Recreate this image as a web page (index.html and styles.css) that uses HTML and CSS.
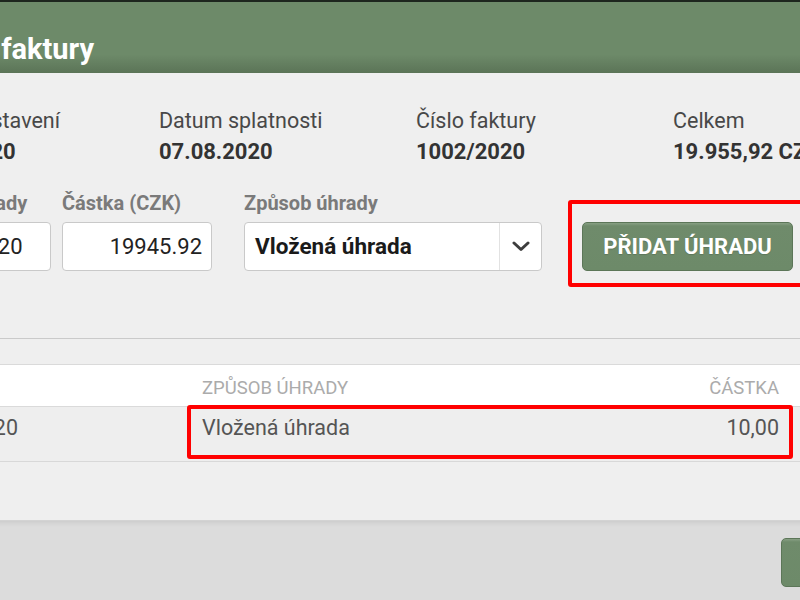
FILE: index.html
```html
<!DOCTYPE html>
<html lang="cs">
<head>
<meta charset="utf-8">
<title>Úhrady faktury</title>
<link rel="stylesheet" href="styles.css">
</head>
<body>
<div class="modal">
  <div class="modal-header">
    <h1 class="title">Úhrady faktury</h1>
  </div>
  <div class="modal-body">
    <div class="info">
      <div class="info-item"><div class="info-label">Datum vystavení</div><div class="info-value">24.07.2020</div></div>
      <div class="info-item"><div class="info-label">Datum splatnosti</div><div class="info-value">07.08.2020</div></div>
      <div class="info-item"><div class="info-label">Číslo faktury</div><div class="info-value">1002/2020</div></div>
      <div class="info-item"><div class="info-label">Celkem</div><div class="info-value">19.955,92 CZK</div></div>
    </div>

    <div class="form-row">
      <div class="field field-date">
        <label class="field-label">Datum úhrady</label>
        <div class="input">03.08.2020</div>
      </div>
      <div class="field field-amount">
        <label class="field-label">Částka (CZK)</label>
        <div class="input input-right">19945.92</div>
      </div>
      <div class="field field-method">
        <label class="field-label">Způsob úhrady</label>
        <div class="select">
          <span class="select-text">Vložená úhrada</span>
          <span class="select-arrow">
            <svg width="18" height="11" viewBox="0 0 18 11"><polyline points="2,2 9,8.5 16,2" fill="none" stroke="#3d3d3d" stroke-width="3" stroke-linecap="round" stroke-linejoin="round"/></svg>
          </span>
        </div>
      </div>
      <div class="field field-btn">
        <button class="btn">Přidat úhradu</button>
        <div class="mark mark-btn"></div>
      </div>
    </div>

    <div class="divider"></div>

    <div class="table">
      <div class="trow thead">
        <div class="cell c1">Datum</div>
        <div class="cell c2">Způsob úhrady</div>
        <div class="cell c3">Částka</div>
        <div class="cell c4"></div>
      </div>
      <div class="trow tbody">
        <div class="cell c1">03.08.2020</div>
        <div class="cell c2">Vložená úhrada</div>
        <div class="cell c3">10,00</div>
        <div class="cell c4"></div>
        <div class="mark mark-row"></div>
      </div>
    </div>
  </div>
  <div class="modal-footer">
    <button class="btn btn-footer">Zavřít</button>
  </div>
</div>
</body>
</html>
```

FILE: styles.css
```css
html, body {
  margin: 0;
  padding: 0;
}
body {
  background: #1d261e;
  padding-top: 2px;
  overflow: hidden;
  font-family: Roboto, "Liberation Sans", sans-serif;
  height: 600px;
  box-sizing: border-box;
}
.modal {
  margin-left: -118px;
  width: 1068px;
  background: #efefef;
}
.modal-header {
  height: 71px;
  box-sizing: border-box;
  padding: 30px 20px 0;
  background: linear-gradient(to bottom, #6d8a69 0%, #6d8a69 74%, #5b7457 100%);
}
.title {
  margin: 0;
  font-size: 29px;
  line-height: 34px;
  font-weight: 700;
  color: #ffffff;
  white-space: nowrap;
}
.modal-body {
  padding: 35px 20px 58px;
}
.info {
  display: grid;
  grid-template-columns: repeat(4, 257px);
}
.info-label {
  font-size: 21.5px;
  line-height: 26px;
  color: #484848;
  white-space: nowrap;
}
.info-value {
  margin-top: 5px;
  font-size: 22px;
  line-height: 26px;
  font-weight: 700;
  color: #333333;
  white-space: nowrap;
}
.form-row {
  margin-top: 26px;
  display: flex;
  align-items: flex-end;
}
.field {
  display: flex;
  flex-direction: column;
  position: relative;
}
.field-label {
  font-size: 20px;
  line-height: 24px;
  font-weight: 700;
  color: #7a7a7a;
  margin-bottom: 7px;
  white-space: nowrap;
}
.field-date { width: 149px; }
.field-amount { width: 150px; margin-left: 11px; }
.field-method { width: 298px; margin-left: 32px; }
.field-btn { width: 211px; margin-left: 40px; }
.input {
  height: 49px;
  box-sizing: border-box;
  border: 1px solid #c9c9c9;
  border-radius: 4px;
  background: #ffffff;
  padding: 0 9px;
  font-size: 22px;
  line-height: 47px;
  color: #222222;
  white-space: nowrap;
  overflow: hidden;
}
.input-right { text-align: right; }
.select {
  height: 49px;
  box-sizing: border-box;
  border: 1px solid #c9c9c9;
  border-radius: 4px;
  background: #ffffff;
  display: flex;
  align-items: stretch;
}
.select-text {
  flex: 1;
  padding-left: 10px;
  font-size: 22.5px;
  line-height: 47px;
  font-weight: 700;
  color: #1a1a1a;
  white-space: nowrap;
}
.select-arrow {
  width: 41px;
  border-left: 1px solid #e2e2e2;
  display: flex;
  align-items: center;
  justify-content: center;
}
.btn {
  height: 49px;
  box-sizing: border-box;
  border: 1px solid #5c7658;
  border-radius: 5px;
  background: linear-gradient(to bottom, #88a084 0, #6f8b6b 3px, #6d8a69 100%);
  color: #ffffff;
  font-family: Roboto, "Liberation Sans", sans-serif;
  font-size: 22px;
  font-weight: 700;
  text-transform: uppercase;
  padding: 0;
  width: 100%;
  text-shadow: 0 1px 1px rgba(0,0,0,0.15);
}
.mark {
  position: absolute;
  border: 4px solid #ff0000;
  border-radius: 3px;
  box-sizing: border-box;
  pointer-events: none;
}
.mark-btn {
  left: -14px;
  top: -22px;
  width: 245px;
  height: 87px;
}
.divider {
  margin-top: 67px;
  height: 1px;
  background: #cacaca;
}
.table {
  margin-top: 25px;
  border-top: 1px solid #dadada;
}
.trow {
  display: grid;
  grid-template-columns: 286px 405px 200px 137px;
  position: relative;
}
.cell {
  padding: 0 14px;
  white-space: nowrap;
}
.cell.c1 { padding-left: 8px; }
.cell.c3 { text-align: right; }
.thead {
  background: #ffffff;
  border-bottom: 1px solid #dadada;
}
.thead .cell {
  padding-top: 5px;
  line-height: 36px;
  font-size: 18.5px;
  color: #ababab;
  text-transform: uppercase;
}
.tbody {
  background: #eeeeee;
  border-bottom: 1px solid #d8d8d8;
}
.tbody .cell {
  padding-top: 8px;
  padding-bottom: 20px;
  line-height: 26px;
  font-size: 21.5px;
  color: #555555;
}
.mark-row {
  left: 285px;
  top: -2px;
  width: 606px;
  height: 54px;
}
.modal-footer {
  background: #dcdcdc;
  box-shadow: inset 0 4px 5px -2px rgba(0,0,0,0.08);
  border-top: 1px solid #d3d3d3;
  padding: 17px 20px 30px;
  display: flex;
  justify-content: flex-end;
}
.btn-footer {
  width: 149px;
}
```
